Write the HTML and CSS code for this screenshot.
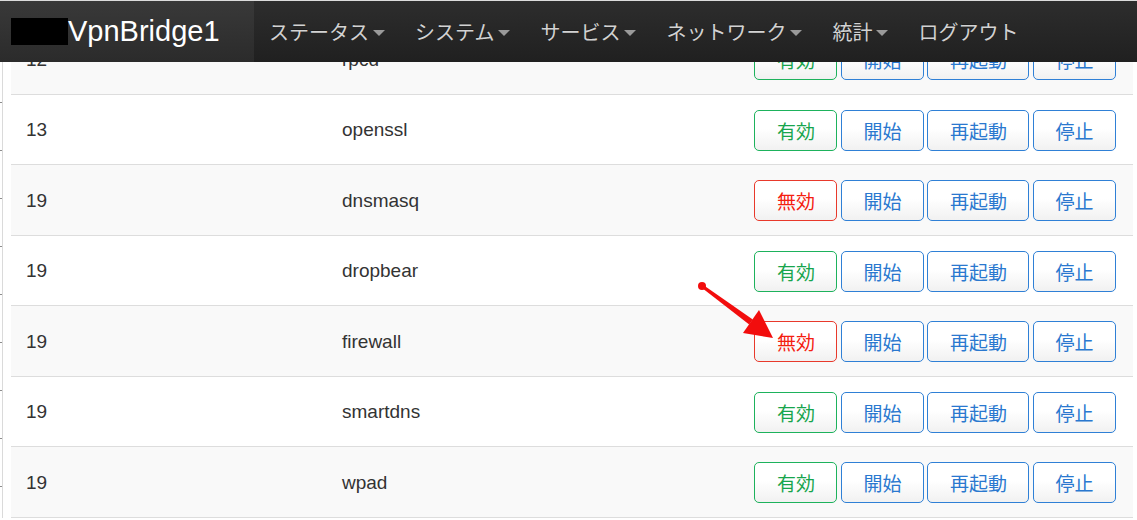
FILE: index.html
```html
<!DOCTYPE html>
<html lang="ja">
<head>
<meta charset="utf-8">
<title>VpnBridge1</title>
<link rel="stylesheet" href="styles.css">
</head>
<body>
<header class="navbar">
  <div class="brand"><span class="redact"></span>VpnBridge1</div>
  <ul class="nav">
    <li>ステータス<span class="caret"></span></li>
    <li>システム<span class="caret"></span></li>
    <li>サービス<span class="caret"></span></li>
    <li>ネットワーク<span class="caret"></span></li>
    <li>統計<span class="caret"></span></li>
    <li>ログアウト</li>
  </ul>
</header>

<div class="page">
  <div class="gutter"></div>
  <div class="table">
    <div class="row alt">
      <div class="num">12</div><div class="name">rpcd</div>
      <div class="actions"><span class="btn ok">有効</span><span class="btn">開始</span><span class="btn">再起動</span><span class="btn">停止</span></div>
    </div>
    <div class="row">
      <div class="num">13</div><div class="name">openssl</div>
      <div class="actions"><span class="btn ok">有効</span><span class="btn">開始</span><span class="btn">再起動</span><span class="btn">停止</span></div>
    </div>
    <div class="row alt">
      <div class="num">19</div><div class="name">dnsmasq</div>
      <div class="actions"><span class="btn off">無効</span><span class="btn">開始</span><span class="btn">再起動</span><span class="btn">停止</span></div>
    </div>
    <div class="row">
      <div class="num">19</div><div class="name">dropbear</div>
      <div class="actions"><span class="btn ok">有効</span><span class="btn">開始</span><span class="btn">再起動</span><span class="btn">停止</span></div>
    </div>
    <div class="row alt">
      <div class="num">19</div><div class="name">firewall</div>
      <div class="actions"><span class="btn off">無効</span><span class="btn">開始</span><span class="btn">再起動</span><span class="btn">停止</span></div>
    </div>
    <div class="row">
      <div class="num">19</div><div class="name">smartdns</div>
      <div class="actions"><span class="btn ok">有効</span><span class="btn">開始</span><span class="btn">再起動</span><span class="btn">停止</span></div>
    </div>
    <div class="row alt">
      <div class="num">19</div><div class="name">wpad</div>
      <div class="actions"><span class="btn ok">有効</span><span class="btn">開始</span><span class="btn">再起動</span><span class="btn">停止</span></div>
    </div>
  </div>
</div>

<svg class="arrow" width="1137" height="520" viewBox="0 0 1137 520">
  <circle cx="702" cy="286" r="4" fill="#f20d0d"/>
  <polygon points="701.1,287.2 702.9,284.8 752.8,319.6 749.2,324.4" fill="#f20d0d"/>
  <polygon points="759,310 773,338 743,333" fill="#f20d0d"/>
</svg>
</body>
</html>
```

FILE: styles.css
```css
html, body {
  margin: 0;
  padding: 0;
  background: #fff;
}

body {
  font-family: "Liberation Sans", Arial, "Noto Sans CJK JP", sans-serif;
  color: #333;
  padding-top: 24px;
  overflow: hidden;
}

.navbar {
  position: fixed;
  top: 0;
  left: 0;
  right: 0;
  height: 61px;
  border-top: 1px solid #dcdcdc;
  background: linear-gradient(#2d2d2d, #202020);
  display: flex;
  align-items: center;
  z-index: 10;
}

.brand {
  width: 254px;
  height: 100%;
  box-sizing: border-box;
  padding-left: 11px;
  display: flex;
  align-items: center;
  background: linear-gradient(#393939, #2b2b2b);
  color: #fff;
  font-family: "Liberation Sans", Arial, sans-serif;
  font-size: 29px;
}

.redact {
  display: inline-block;
  width: 57px;
  height: 27px;
  background: #000;
  margin-top: -1px;
}

.nav {
  list-style: none;
  margin: 0;
  padding: 0;
  display: flex;
  height: 100%;
  align-items: center;
}

.nav li {
  padding: 0 15px;
  font-family: "Noto Sans CJK JP", sans-serif;
  font-size: 20px;
  color: #d2d2d2;
  text-shadow: 0 -1px 0 rgba(0, 0, 0, 0.25);
  display: flex;
  align-items: center;
  line-height: 1;
}

.caret {
  display: inline-block;
  width: 0;
  height: 0;
  margin-left: 4px;
  margin-top: 3px;
  border-top: 6px solid #9a9a9a;
  border-left: 6px solid transparent;
  border-right: 6px solid transparent;
}

.page {
  display: flex;
}

.gutter {
  width: 2px;
  flex: none;
  border-right: 1px solid #dadada;
  background: repeating-linear-gradient(to bottom, transparent 0 30px, #8c8c8c 30px 31px, transparent 31px 48px);
  margin-right: 7px;
}

.table {
  width: 1122px;
  border-left: 1px solid transparent;
}

.row {
  height: 70.5px;
  box-sizing: border-box;
  border-bottom: 1px solid #dddddd;
  display: flex;
  align-items: center;
  font-size: 19px;
  background: #fff;
}

.row.alt {
  background: #f9f9f9;
}

.num {
  width: 316px;
  flex: none;
  box-sizing: border-box;
  padding-left: 15px;
  padding-top: 2px;
}

.name {
  flex: 1;
  padding-left: 15px;
  padding-top: 2px;
}

.actions {
  display: flex;
  gap: 3.5px;
  padding-right: 17px;
  padding-top: 2px;
}

.btn {
  display: inline-flex;
  align-items: center;
  justify-content: center;
  height: 41px;
  box-sizing: border-box;
  padding: 0 21.5px;
  border: 1px solid #2f80d6;
  border-radius: 5px;
  background: linear-gradient(#ffffff 45%, #f1f1f1);
  color: #2a78cf;
  font-family: "Noto Sans CJK JP", sans-serif;
  font-size: 19px;
  line-height: 1;
}

.btn.ok {
  border-color: #1db25c;
  color: #17a54d;
}

.btn.off {
  border-color: #e8392b;
  color: #f4200f;
}

.arrow {
  position: absolute;
  left: 0;
  top: 0;
  pointer-events: none;
  z-index: 5;
}
```
